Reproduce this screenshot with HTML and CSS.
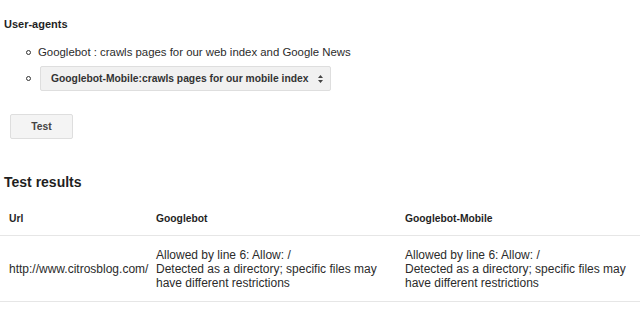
FILE: index.html
```html
<!DOCTYPE html>
<html lang="en">
<head>
    <meta charset="UTF-8">
    <title>robots.txt Tester</title>
    <link rel="stylesheet" href="styles.css">
</head>
<body>
    <!-- User-agent picker -->
    <h3 class="ua-title">User-agents</h3>
    <ul class="agents">
        <li class="agent">
            <span class="bullet"></span>
            <span>Googlebot : crawls pages for our web index and Google News</span>
        </li>
        <li class="agent">
            <span class="bullet"></span>
            <div class="select">
                <span>Googlebot-Mobile:crawls pages for our mobile index</span>
                <svg class="select-arrow" width="5" height="8" viewBox="0 0 5 8">
                    <path d="M2.5 0 L5 3 L0 3 Z M0 5 L5 5 L2.5 8 Z" fill="#444"/>
                </svg>
            </div>
        </li>
    </ul>

    <button type="button" class="btn">Test</button>

    <!-- Results -->
    <h2 class="results-title">Test results</h2>
    <table class="results">
        <thead>
            <tr>
                <th class="col-url">Url</th>
                <th class="col-bot">Googlebot</th>
                <th class="col-mobile">Googlebot-Mobile</th>
            </tr>
        </thead>
        <tbody>
            <tr>
                <td>http://www.citrosblog.com/</td>
                <td>Allowed by line 6: Allow: /<br>Detected as a directory; specific files may have different restrictions</td>
                <td>Allowed by line 6: Allow: /<br>Detected as a directory; specific files may have different restrictions</td>
            </tr>
        </tbody>
    </table>
</body>
</html>
```

FILE: styles.css
```css
:root {
    --text-color: #2b2b2b;
    --heading-color: #1f1f1f;
    --muted-text: #444444;
    --line-color: #e6e6e6;
    --control-bg: #f1f1f1;
    --control-border: #dedede;
}

body {
    margin: 0;
    font-family: 'Liberation Sans', Arial, sans-serif;
    color: var(--text-color);
    background-color: #ffffff;
}

.ua-title {
    margin: 18px 0 0 4px;
    font-size: 11px;
    line-height: 13px;
    font-weight: bold;
    color: var(--heading-color);
}

.agents {
    list-style: none;
    margin: 14px 0 0 0;
    padding: 0;
}

.agent {
    display: flex;
    align-items: center;
    gap: 7px;
    padding-left: 26px;
    font-size: 11.4px;
    line-height: 14px;
}

.agent + .agent {
    margin-top: 7px;
}

.bullet {
    width: 3px;
    height: 3px;
    border: 1px solid #333333;
    border-radius: 50%;
    flex-shrink: 0;
}

.select {
    display: flex;
    align-items: center;
    justify-content: space-between;
    box-sizing: border-box;
    width: 291px;
    height: 25px;
    margin-left: 2px;
    padding: 0 7px 0 10px;
    background-color: var(--control-bg);
    border: 1px solid var(--control-border);
    border-radius: 2px;
    font-size: 10.3px;
    font-weight: bold;
    color: #333333;
}

.select-arrow {
    display: block;
}

.btn {
    display: block;
    box-sizing: border-box;
    width: 63px;
    height: 25px;
    margin: 23px 0 0 10px;
    padding: 0;
    background-color: #f4f4f4;
    border: 1px solid var(--control-border);
    border-radius: 2px;
    font-family: inherit;
    font-size: 10.3px;
    font-weight: bold;
    color: var(--muted-text);
}

.results-title {
    margin: 35px 0 0 4px;
    font-size: 14px;
    line-height: 16px;
    font-weight: bold;
    color: var(--heading-color);
}

.results {
    width: 640px;
    margin-top: 10px;
    border-collapse: collapse;
    table-layout: fixed;
}

.results th {
    padding: 13px 9px 10px 9px;
    font-size: 10.3px;
    line-height: 12px;
    font-weight: bold;
    text-align: left;
    color: var(--heading-color);
    border-bottom: 1px solid var(--line-color);
}

.results td {
    padding: 12px 9px 11px 9px;
    font-size: 12px;
    line-height: 14px;
    vertical-align: middle;
    border-bottom: 1px solid var(--line-color);
}

.col-url {
    width: 129px;
}

.col-bot {
    width: 231px;
}

.col-mobile {
    width: 226px;
}
```
